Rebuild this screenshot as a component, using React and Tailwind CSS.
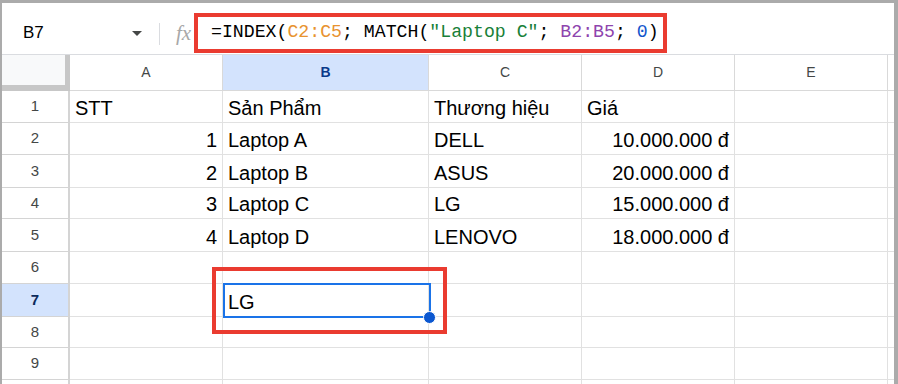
import React from 'react';

const cols = ['A', 'B', 'C', 'D', 'E'];
const colW = ['w-[153px]', 'w-[206px]', 'w-[153px]', 'w-[153px]', 'w-[153px]'];

// [n, height, cells: [text, align]]
const rows = [
    [1, 'h-[32px]', [['STT'], ['Sản Phẩm'], ['Thương hiệu'], ['Giá'], ['']]],
    [2, 'h-[32px]', [['1', 'r'], ['Laptop A'], ['DELL'], ['10.000.000 đ', 'r'], ['']]],
    [3, 'h-[33px]', [['2', 'r'], ['Laptop B'], ['ASUS'], ['20.000.000 đ', 'r'], ['']]],
    [4, 'h-[31px]', [['3', 'r'], ['Laptop C'], ['LG'], ['15.000.000 đ', 'r'], ['']]],
    [5, 'h-[33px]', [['4', 'r'], ['Laptop D'], ['LENOVO'], ['18.000.000 đ', 'r'], ['']]],
    [6, 'h-[32px]', [[''], [''], [''], [''], ['']]],
    [7, 'h-[33px]', [[''], ['LG'], [''], [''], ['']]],
    [8, 'h-[31px]', [[''], [''], [''], [''], ['']]],
    [9, 'h-[32px]', [[''], [''], [''], [''], ['']]],
    ['', 'h-[32px]', [[''], [''], [''], [''], ['']]],
];

const App = () => {
    return (
        <div className="relative w-[898px] h-[384px] overflow-hidden bg-white font-['Liberation_Sans',Arial,sans-serif]">
            <div className="h-full border-t-[3px] border-l-2 border-r-4 border-[#ababab] flex flex-col">
                {/* formula bar */}
                <div className="h-[52px] shrink-0 flex items-start pt-[10px] border-b border-[#dadce0]">
                    <div className="w-[157px] h-[40px] flex items-center justify-between pl-[21px] pr-[17px]">
                        <span className="text-[17px] text-black">B7</span>
                        <svg width="10" height="5" viewBox="0 0 10 5">
                            <path d="M0 0 L10 0 L5 5 Z" fill="#444746" />
                        </svg>
                    </div>
                    <div className="w-px h-[22px] mt-[10px] bg-[#dadce0]" />
                    <div className="w-[34px] h-[40px] flex items-center pl-[16px]">
                        <span className="font-['Liberation_Serif',serif] italic text-[21px] text-[#a8a8a8] leading-none">fx</span>
                    </div>
                    <div className="w-[473px] h-[40px] border-4 border-[#ea3b30] flex items-center pl-[13px] font-['Liberation_Mono','DejaVu_Sans_Mono',monospace] text-[18.2px] text-black whitespace-pre">
                        <span>=INDEX(</span>
                        <span className="text-[#e8932f]">C2:C5</span>
                        <span>; MATCH(</span>
                        <span className="text-[#188038]">"Laptop C"</span>
                        <span>; </span>
                        <span className="text-[#8e44ad]">B2:B5</span>
                        <span>; </span>
                        <span className="text-[#1155cc]">0</span>
                        <span>)</span>
                    </div>
                </div>

                {/* column headers */}
                <div className="h-[36px] shrink-0 flex text-[14px] text-[#444746]">
                    <div className="w-[68px] bg-[#f8f9fa] border-r-[5px] border-b-[6px] border-[#c7c7c7]" />
                    {cols.map((c, i) => (
                        <div
                            key={c}
                            className={`${colW[i]} flex items-center justify-center border-r border-b border-[#d9d9d9] ${c === 'B' ? 'bg-[#d3e3fd] font-bold text-[#0b3a8a]' : ''}`}
                        >
                            {c}
                        </div>
                    ))}
                    <div className="flex-1 border-b border-[#d9d9d9]" />
                </div>

                {/* rows */}
                {rows.map(([n, h, cells], r) => (
                    <div key={r} className={`${h} shrink-0 flex`}>
                        <div
                            className={`w-[68px] flex items-center justify-center text-[15px] border-r-2 border-b border-[#d4d4d4] ${n === 7 ? 'bg-[#d3e3fd] font-bold text-[#0b2a5b]' : 'text-[#444746]'}`}
                        >
                            {n}
                        </div>
                        {cells.map(([t, a], i) => (
                            <div
                                key={i}
                                className={`${colW[i]} flex items-end pb-[2px] px-[5px] text-[20px] leading-[23px] text-black border-r border-b border-[#e1e1e1] whitespace-nowrap overflow-hidden ${a === 'r' ? 'justify-end' : 'justify-start'}`}
                            >
                                {t}
                            </div>
                        ))}
                        <div className="flex-1 border-b border-[#e1e1e1]" />
                    </div>
                ))}
            </div>

            {/* selected cell B7 */}
            <div className="absolute left-[223px] top-[283px] w-[208px] h-[35px] border-2 border-[#1a73e8]" />
            <div className="absolute left-[423px] top-[311px] w-[13px] h-[13px] rounded-full bg-[#0b57d0] border border-white" />

            {/* annotation */}
            <div className="absolute left-[212px] top-[267px] w-[235px] h-[67px] border-4 border-[#ea3b30]" />
        </div>
    );
};

export default App;
